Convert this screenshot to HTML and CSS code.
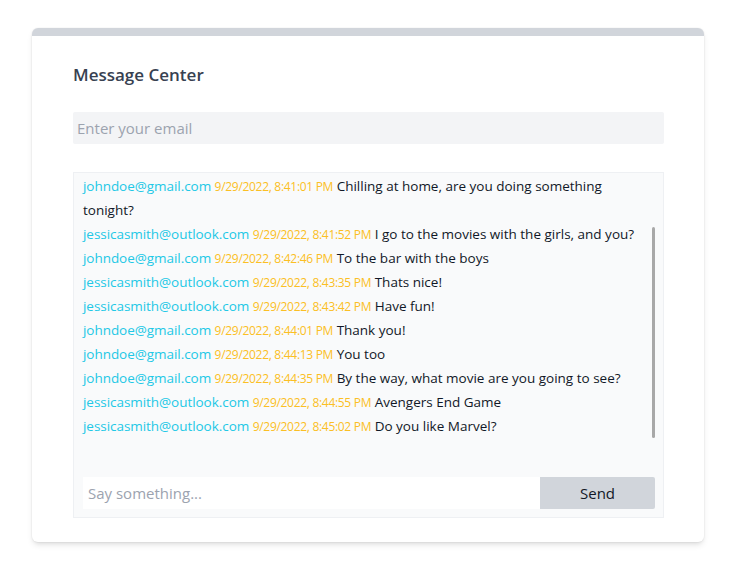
FILE: index.html
```html
<!DOCTYPE html>
<html lang="en">
<head>
<meta charset="utf-8">
<title>Message Center</title>
<link rel="stylesheet" href="styles.css">
</head>
<body>
<div class="page">
  <div class="card">
    <h1 class="title">Message Center</h1>
    <input class="email" type="text" placeholder="Enter your email">
    <div class="box">
      <div class="list">
        <div class="msg"><span class="from">johndoe@gmail.com</span> <span class="time">9/29/2022, 8:41:01 PM</span> <span class="text">Chilling at home, are you doing something tonight?</span></div>
        <div class="msg"><span class="from">jessicasmith@outlook.com</span> <span class="time">9/29/2022, 8:41:52 PM</span> <span class="text">I go to the movies with the girls, and you?</span></div>
        <div class="msg"><span class="from">johndoe@gmail.com</span> <span class="time">9/29/2022, 8:42:46 PM</span> <span class="text">To the bar with the boys</span></div>
        <div class="msg"><span class="from">jessicasmith@outlook.com</span> <span class="time">9/29/2022, 8:43:35 PM</span> <span class="text">Thats nice!</span></div>
        <div class="msg"><span class="from">jessicasmith@outlook.com</span> <span class="time">9/29/2022, 8:43:42 PM</span> <span class="text">Have fun!</span></div>
        <div class="msg"><span class="from">johndoe@gmail.com</span> <span class="time">9/29/2022, 8:44:01 PM</span> <span class="text">Thank you!</span></div>
        <div class="msg"><span class="from">johndoe@gmail.com</span> <span class="time">9/29/2022, 8:44:13 PM</span> <span class="text">You too</span></div>
        <div class="msg"><span class="from">johndoe@gmail.com</span> <span class="time">9/29/2022, 8:44:35 PM</span> <span class="text">By the way, what movie are you going to see?</span></div>
        <div class="msg"><span class="from">jessicasmith@outlook.com</span> <span class="time">9/29/2022, 8:44:55 PM</span> <span class="text">Avengers End Game</span></div>
        <div class="msg"><span class="from">jessicasmith@outlook.com</span> <span class="time">9/29/2022, 8:45:02 PM</span> <span class="text">Do you like Marvel?</span></div>
        <div class="thumb"></div>
      </div>
      <div class="composer">
        <input class="say" type="text" placeholder="Say something...">
        <button class="send" type="button">Send</button>
      </div>
    </div>
  </div>
</div>
</body>
</html>
```

FILE: styles.css
```css
html, body {
  margin: 0;
  padding: 0;
  background: #ffffff;
}
body {
  font-family: "Open Sans", "Noto Sans", sans-serif;
  color: #111827;
}
.page {
  padding-top: 28px;
  padding-bottom: 20px;
  display: flex;
  justify-content: center;
}
.card {
  width: 672px;
  box-sizing: border-box;
  background: #ffffff;
  border-top: 8px solid #d1d5db;
  border-radius: 6px;
  box-shadow: 0 4px 6px -1px rgba(0,0,0,0.1), 0 2px 4px -2px rgba(0,0,0,0.1), 0 0 0 1px rgba(0,0,0,0.02);
  padding: 25px 40px 24px 41px;
  display: flex;
  flex-direction: column;
}
.title {
  margin: 0;
  font-size: 17px;
  line-height: 28px;
  font-weight: 600;
  color: #374151;
}
.email {
  margin-top: 23px;
  height: 32px;
  box-sizing: border-box;
  border: none;
  border-radius: 2px;
  background: #f3f4f6;
  padding: 0 4px;
  font-family: inherit;
  font-size: 15px;
  outline: none;
}
.email::placeholder, .say::placeholder {
  color: #9ca3af;
}
.box {
  margin-top: 28px;
  border: 1px solid #eef0f3;
  background: #f9fafb;
  padding: 1px 8px 8px 9px;
  display: flex;
  flex-direction: column;
}
.list {
  position: relative;
  height: 303px;
  padding-right: 12px;
}
.msg {
  font-size: 13.5px;
  line-height: 24px;
}
.from {
  color: #22c8e6;
  letter-spacing: -0.05px;
}
.time {
  color: #fbbf24;
  font-size: 12px;
  line-height: 16px;
  letter-spacing: -0.3px;
}
.text { color: #111827; }
.thumb {
  position: absolute;
  right: 0;
  top: 53px;
  width: 3px;
  height: 211px;
  background: #a8a8a8;
  border-radius: 2px;
}
.composer {
  display: flex;
  height: 32px;
}
.say {
  flex: 1;
  min-width: 0;
  border: none;
  background: #ffffff;
  padding: 0 5px;
  font-family: inherit;
  font-size: 15px;
  outline: none;
}
.send {
  width: 115px;
  border: none;
  border-radius: 0 2px 2px 0;
  background: #d1d5db;
  font-family: inherit;
  font-size: 15px;
  color: #111827;
}
```
